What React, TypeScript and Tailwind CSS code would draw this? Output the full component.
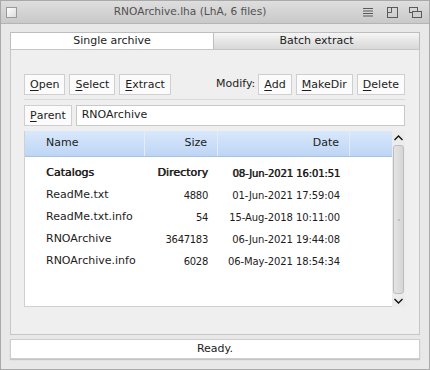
import React from "react";

const Btn = ({ u, rest }: { u: string; rest: string }) => (
  <div className="h-[21px] px-[5px] flex items-center bg-[#fbfbfb] border border-[#cfcfcf] leading-none whitespace-nowrap">
    <span className="underline underline-offset-[2px]">{u}</span>
    <span>{rest}</span>
  </div>
);

const rows = [
  { name: "Catalogs", size: "Directory", date: "08-Jun-2021 16:01:51", bold: true },
  { name: "ReadMe.txt", size: "4880", date: "01-Jun-2021 17:59:04" },
  { name: "ReadMe.txt.info", size: "54", date: "15-Aug-2018 10:11:00" },
  { name: "RNOArchive", size: "3647183", date: "06-Jun-2021 19:44:08" },
  { name: "RNOArchive.info", size: "6028", date: "06-May-2021 18:54:34" },
];

const fauxBold = "[text-shadow:0.6px_0_0_#1c1c1c]";

export default function App() {
  return (
    <div className="w-[430px] h-[370px] bg-[#e8e8e8] border border-[#a9a9a9] flex flex-col font-['DejaVu_Sans',sans-serif] text-[11px] text-[#1c1c1c] overflow-hidden">
      {/* Title bar */}
      <div className="h-[23px] shrink-0 flex items-center bg-gradient-to-b from-[#dedede] to-[#c9c9c9] border-b border-[#b4b4b4]">
        <div className="ml-[5px] w-[11px] h-[11px] border border-[#9a9a9a] bg-gradient-to-br from-[#ffffff] to-[#dcdcdc]" />
        <div className="flex-1 text-center text-[#505050] text-[10.6px]">RNOArchive.lha (LhA, 6 files)</div>
        <div className="flex items-center">
          <svg width="10" height="10" viewBox="0 0 10 10" className="mr-[14px]">
            <path d="M0 1.5H10M0 4H10M0 6.5H10M0 9H10" stroke="#5a5a5a" strokeWidth="1" />
          </svg>
          <svg width="11" height="11" viewBox="0 0 11 11" className="mr-[11px]">
            <rect x="0.5" y="0.5" width="10" height="10" fill="none" stroke="#5a5a5a" />
            <path d="M4.5 0.5V5.5H0.5" fill="none" stroke="#5a5a5a" />
          </svg>
          <svg width="13" height="11" viewBox="0 0 13 11" className="mr-[7px]">
            <rect x="0.5" y="0.5" width="8" height="5" fill="none" stroke="#5a5a5a" />
            <rect x="3.5" y="4.5" width="9" height="6" fill="#d0d0d0" stroke="#5a5a5a" />
          </svg>
        </div>
      </div>

      {/* Content */}
      <div className="px-[9px] pt-[8px] flex flex-col">
        {/* Tabs */}
        <div className="flex h-[17px]">
          <div className="w-[204px] bg-white border border-b-0 border-[#bdbdbd] flex items-center justify-center">
            Single archive
          </div>
          <div className="flex-1 bg-gradient-to-b from-[#f5f5f5] to-[#d8d8d8] border border-l-0 border-b-0 border-[#bdbdbd] flex items-center justify-center">
            Batch extract
          </div>
        </div>

        {/* Panel */}
        <div className="h-[286px] bg-[#efefef] border border-[#c6c6c6] pl-[13px] pr-[14px] pt-[24px] flex flex-col">
          <div className="flex items-center">
            <div className="flex gap-[4px]">
              <Btn u="O" rest="pen" />
              <Btn u="S" rest="elect" />
              <Btn u="E" rest="xtract" />
            </div>
            <div className="flex-1" />
            <span className="mr-[3px]">Modify:</span>
            <div className="flex gap-[4px]">
              <Btn u="A" rest="dd" />
              <Btn u="M" rest="akeDir" />
              <Btn u="D" rest="elete" />
            </div>
          </div>
          <div className="mt-[4px] h-px bg-[#d9d9d9]" />
          <div className="mt-[5px] flex gap-[4px]">
            <Btn u="P" rest="arent" />
            <div className="flex-1 h-[21px] bg-white border border-[#c8c8c8] flex items-center px-[5px]">
              RNOArchive
            </div>
          </div>

          {/* List */}
          <div className="mt-[5px] flex h-[176px]">
            <div className="w-[368px] flex flex-col bg-white border-l border-b border-[#d0d0d0]">
              <div className="h-[26px] shrink-0 flex bg-gradient-to-b from-[#d9e8fc] to-[#bdd5f5] border-b border-[#a9c0de]">
                <div className="w-[120px] flex items-center pl-[21px] border-r border-[#e4ecf7]">Name</div>
                <div className="w-[73px] flex items-center justify-end pr-[10px] border-r border-[#e4ecf7]">Size</div>
                <div className="w-[132px] flex items-center justify-end pr-[10px] border-r border-[#e4ecf7]">Date</div>
                <div className="flex-1" />
              </div>
              <div className="pt-[5px] flex flex-col">
                {rows.map((r) => (
                  <div key={r.name} className={`h-[22px] flex items-center ${r.bold ? fauxBold : ""}`}>
                    <div className="w-[120px] pl-[21px]">{r.name}</div>
                    <div
                      className={`w-[73px] text-right pr-[10px] ${
                        r.bold ? "" : "text-[10px] tracking-[-0.3px]"
                      }`}
                    >
                      {r.size}
                    </div>
                    <div className="w-[132px] text-right pr-[10px] whitespace-nowrap text-[10px] tracking-[-0.1px]">
                      {r.date}
                    </div>
                  </div>
                ))}
              </div>
            </div>
            {/* Scrollbar */}
            <div className="w-[13px] flex flex-col bg-[#ececec]">
              <div className="h-[14px] flex items-center justify-center">
                <svg width="9" height="6" viewBox="0 0 9 6">
                  <path d="M0.5 5L4.5 1L8.5 5" fill="none" stroke="#111" strokeWidth="1.4" />
                </svg>
              </div>
              <div className="flex-1 px-px">
                <div className="h-full rounded-[3px] border border-[#bdbdbd] bg-gradient-to-r from-[#e4e4e4] to-[#d6d6d6] flex items-center justify-center">
                  <div className="w-[2px] h-[2px] bg-[#c0c0c0]" />
                </div>
              </div>
              <div className="h-[13px] flex items-center justify-center">
                <svg width="9" height="6" viewBox="0 0 9 6">
                  <path d="M0.5 1L4.5 5L8.5 1" fill="none" stroke="#111" strokeWidth="1.4" />
                </svg>
              </div>
            </div>
          </div>
        </div>

        {/* Status bar */}
        <div className="mt-[4px] h-[20px] bg-white border border-[#cdcdcd] shadow-[0_1px_1px_rgba(0,0,0,0.15)] flex items-center justify-center">
          Ready.
        </div>
      </div>
    </div>
  );
}
